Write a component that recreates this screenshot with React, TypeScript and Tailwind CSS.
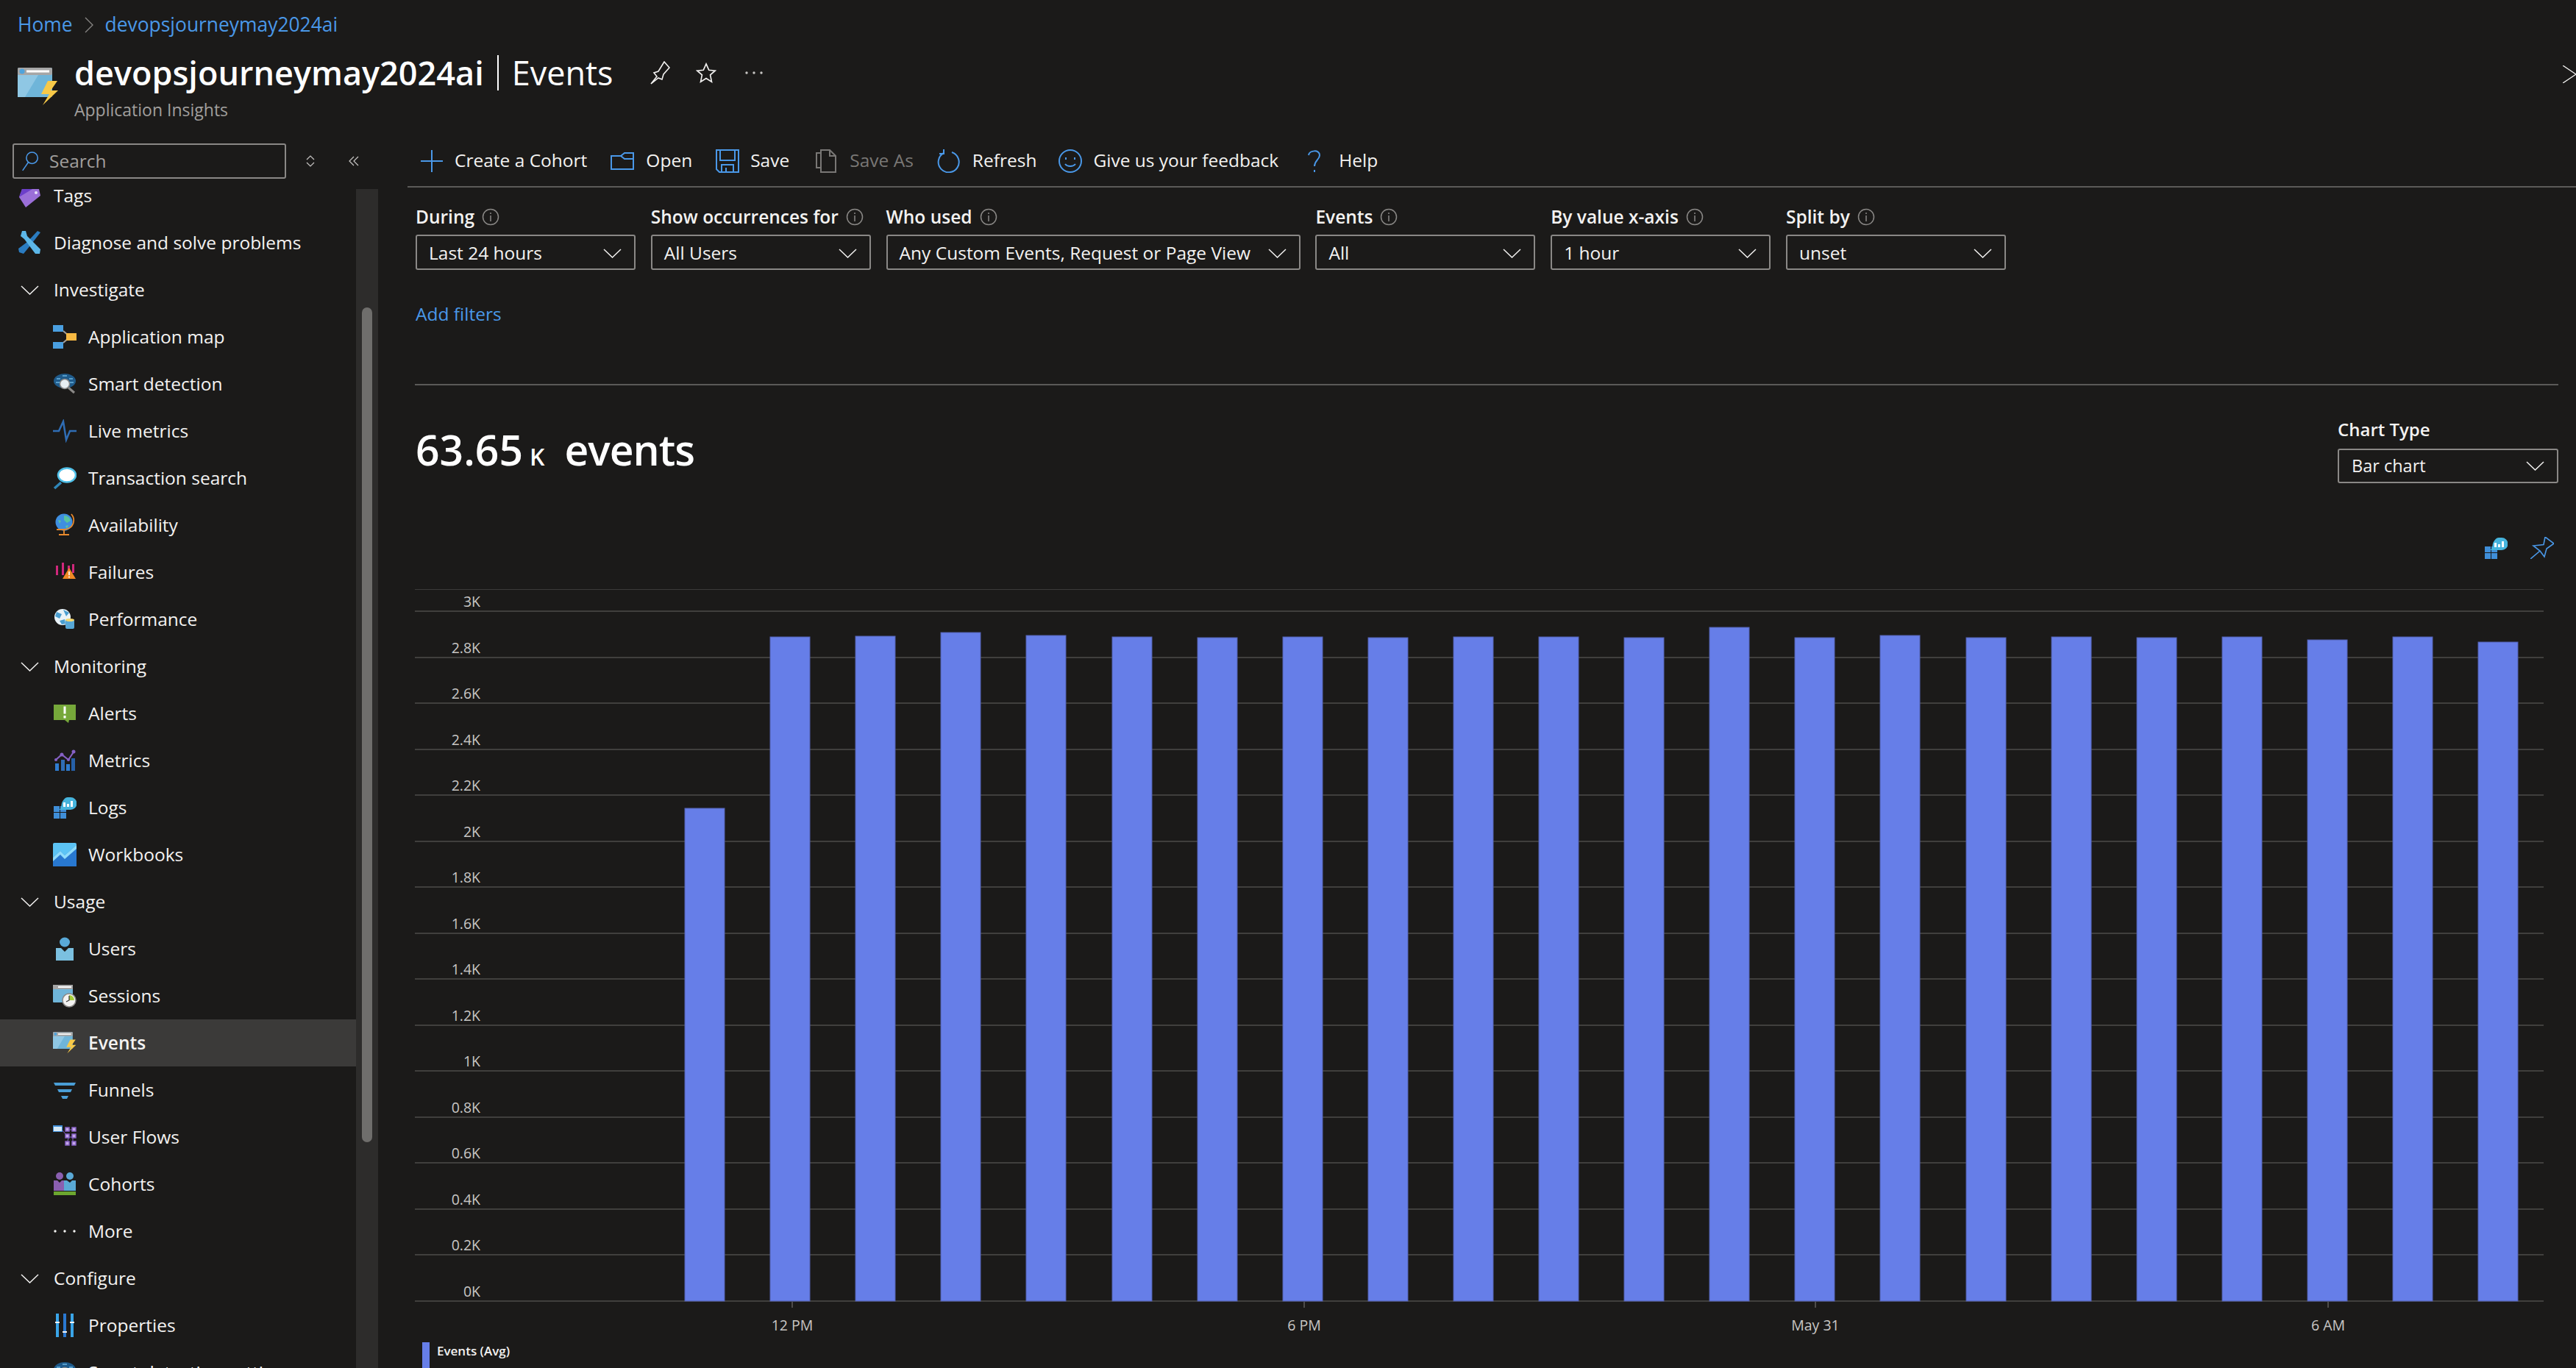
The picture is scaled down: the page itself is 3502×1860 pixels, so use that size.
import type { ReactNode } from "react";

const BLUE = "#4a98e8";

const Chevron = ({ className = "w-[25px] h-[13px]" }: { className?: string }) => (
  <svg viewBox="0 0 25 13" className={className} fill="none" stroke="#f3f2f1" strokeWidth="1.5">
    <path d="M1 1 L12.5 12 L24 1" />
  </svg>
);

const Info = () => (
  <svg viewBox="0 0 24 24" className="w-[24px] h-[24px] ml-[10px]" fill="none" stroke="#8a8886" strokeWidth="1.5">
    <circle cx="12" cy="12" r="10.5" />
    <path d="M12 10v8M12 6v2" />
  </svg>
);

const EventsIcon = ({ className }: { className: string }) => (
  <svg viewBox="0 0 56 52" className={className}>
    <rect x="0" y="0" width="47" height="40" rx="2" fill="#6fb5d9" />
    <path d="M0 40V10h28L10 40z" fill="#8fc7e4" />
    <rect x="0" y="0" width="47" height="10" rx="2" fill="#a6a6a6" />
    <rect x="12" y="3.5" width="31" height="3" fill="#fff" />
    <circle cx="6" cy="5" r="3.5" fill="#4fa3dc" />
    <path d="M54 18H41L32 36H43L34 51L55 31H45z" fill="#f7c948" />
  </svg>
);

const icons: Record<string, ReactNode> = {
  tag: (
    <svg viewBox="0 0 32 32" className="w-[32px] h-[32px]">
      <path d="M6 7H29L31 16L11 32L2 18z" fill="#9b6fd8" />
      <path d="M6 7H20L2 18z" fill="#6c3fc9" />
      <circle cx="25" cy="12" r="2" fill="#e8e0f8" />
    </svg>
  ),
  wrench: (
    <svg viewBox="0 0 32 32" className="w-[32px] h-[32px]">
      <path d="M27 0L31 2L17 20L8 31L2 29L1 24L13 15z" fill="#2b7cc0" />
      <path d="M6 0L4 7L9 11L24 31H30L31 25L13 7L11 0z" fill="#5cb7e8" />
    </svg>
  ),
  appmap: (
    <svg viewBox="0 0 32 32" className="w-[32px] h-[32px]">
      <path d="M14 8L22 15M14 24L22 17" stroke="#a19f9d" strokeWidth="2" />
      <rect x="0" y="0" width="14" height="9" fill="#4a9fe0" />
      <rect x="0" y="23" width="14" height="9" fill="#4a9fe0" />
      <rect x="18" y="11" width="14" height="10" fill="#f7b942" />
    </svg>
  ),
  smart: (
    <svg viewBox="0 0 32 32" className="w-[32px] h-[32px]">
      <ellipse cx="16" cy="12" rx="15" ry="10" fill="#1f5a8a" />
      <path d="M5 9h5M13 5h6M22 9h5M4 14h6M22 14h6" stroke="#69b4e0" strokeWidth="1.5" />
      <path d="M21 21L29 28" stroke="#8a8886" strokeWidth="3" />
      <circle cx="16" cy="16" r="6.5" fill="#e8eef2" stroke="#8a8886" strokeWidth="1.5" />
    </svg>
  ),
  live: (
    <svg viewBox="0 0 32 32" className="w-[32px] h-[32px]">
      <path d="M0 16H8L14 3L18 28L23 16H32" fill="none" stroke="#2f6db5" strokeWidth="2.5" />
    </svg>
  ),
  search: (
    <svg viewBox="0 0 32 32" className="w-[32px] h-[32px]">
      <path d="M2 30L11 22" stroke="#2f86b8" strokeWidth="3.5" />
      <ellipse cx="19" cy="12" rx="12" ry="9.5" fill="#fff" stroke="#50c0e8" strokeWidth="2.5" />
    </svg>
  ),
  globe: (
    <svg viewBox="0 0 32 32" className="w-[32px] h-[32px]">
      <circle cx="15" cy="12" r="11.5" fill="#3f8fe0" />
      <path d="M15 3c5 0 8 3 9 7l-5 3-4-4zM7 9l4 1-2 4zM17 17l4-1-2 5z" fill="#59c3a0" />
      <path d="M25 1c6 7 4 20-10 21H5" fill="none" stroke="#e98a2d" strokeWidth="1.8" />
      <path d="M15 23v5M8 29h14" stroke="#e98a2d" strokeWidth="1.8" />
    </svg>
  ),
  failures: (
    <svg viewBox="0 0 32 32" className="w-[32px] h-[32px]">
      <rect x="4" y="7" width="3" height="13" fill="#d0287c" />
      <rect x="12" y="3" width="3" height="17" fill="#d0287c" />
      <rect x="20" y="7" width="3" height="13" fill="#d0287c" />
      <rect x="26" y="5" width="3" height="12" fill="#d0287c" />
      <path d="M22 10L31 25H13z" fill="#f08a24" />
      <path d="M22 15v5M22 21.5v2" stroke="#fff" strokeWidth="1.6" />
    </svg>
  ),
  performance: (
    <svg viewBox="0 0 32 32" className="w-[32px] h-[32px]">
      <circle cx="13" cy="13" r="11" fill="#eaf3f8" />
      <path d="M5 6l7 3-3 6-6-3zM14 3l8 4-4 5zM9 18l7-2 1 6-5 1z" fill="#4a9ed0" />
      <rect x="17" y="16" width="12" height="13" rx="2" fill="#57a7d6" />
      <ellipse cx="23" cy="17" rx="6" ry="2" fill="#f5d76e" />
    </svg>
  ),
  alerts: (
    <svg viewBox="0 0 32 32" className="w-[32px] h-[32px]">
      <path d="M1 4H31V25H22L21 29L16 25H1z" fill="#76a83a" />
      <path d="M16 6.5v10M16 19v3.5" stroke="#fff" strokeWidth="3" />
    </svg>
  ),
  metrics: (
    <svg viewBox="0 0 32 32" className="w-[32px] h-[32px]">
      <rect x="3" y="20" width="5" height="10" fill="#2f7cd0" />
      <rect x="11" y="15" width="5" height="15" fill="#2f6db5" />
      <rect x="18" y="21" width="5" height="9" fill="#2f7cd0" />
      <rect x="25" y="13" width="5" height="17" fill="#2660a8" />
      <path d="M4 15L12 8L21 15L29 3" fill="none" stroke="#8661c5" strokeWidth="2.2" />
      <circle cx="4" cy="15" r="2" fill="#8661c5" />
      <circle cx="12" cy="8" r="2.5" fill="#8661c5" />
      <circle cx="21" cy="15" r="2" fill="#8661c5" />
      <circle cx="28" cy="4" r="2.5" fill="#8661c5" />
    </svg>
  ),
  logs: (
    <svg viewBox="0 0 32 32" className="w-[32px] h-[32px]">
      <rect x="1" y="14" width="8" height="8" fill="#3f8ed8" />
      <rect x="1" y="23" width="8" height="8" fill="#3f8ed8" />
      <rect x="10" y="23" width="8" height="8" fill="#3f8ed8" />
      <rect x="10" y="14" width="8" height="8" fill="#3f8ed8" />
      <path d="M20 2h4a7 7 0 0 1 0 17H8c4-2 3-6 4-9s4-8 8-8z" fill="#46b4dc" />
      <path d="M14 9h3v6h-3zM19 11h3v4h-3zM24 7h3v8h-3z" fill="#fff" />
    </svg>
  ),
  workbooks: (
    <svg viewBox="0 0 32 32" className="w-[32px] h-[32px]">
      <rect x="0" y="0" width="32" height="32" rx="2" fill="#5cc4f5" />
      <path d="M0 20L10 11L16 17L32 3V32H0z" fill="#2878d0" />
      <path d="M0 20L10 11L16 17L32 3V8L16 22L10 16L0 25z" fill="#8fdcfb" />
    </svg>
  ),
  users: (
    <svg viewBox="0 0 32 32" className="w-[32px] h-[32px]">
      <ellipse cx="16" cy="7" rx="7" ry="6.5" fill="#59a9d8" />
      <path d="M4 15h7l5 5 5-5h7v17H4z" fill="#7bc0e0" />
    </svg>
  ),
  sessions: (
    <svg viewBox="0 0 32 32" className="w-[32px] h-[32px]">
      <rect x="0" y="1" width="27" height="24" rx="1" fill="#6fb5d9" />
      <rect x="0" y="1" width="27" height="6" fill="#a6a6a6" />
      <rect x="7" y="3" width="18" height="2" fill="#fff" />
      <circle cx="22" cy="22" r="9" fill="#f3f2f1" stroke="#8a8886" strokeWidth="1.5" />
      <path d="M22 22V15a7 7 0 0 1 7 7z" fill="#a6ce39" />
      <path d="M22 16v6l-4 2" fill="none" stroke="#323130" strokeWidth="1.2" />
    </svg>
  ),
  events: <EventsIcon className="w-[32px] h-[30px]" />,
  funnels: (
    <svg viewBox="0 0 32 32" className="w-[32px] h-[32px]">
      <path d="M1 6H31L29 10H3z" fill="#4a9ed6" />
      <path d="M6 15H26L24 19H8z" fill="#4a9ed6" />
      <path d="M11 24H21L19 28H13z" fill="#4a9ed6" />
    </svg>
  ),
  flows: (
    <svg viewBox="0 0 32 32" className="w-[32px] h-[32px]">
      <rect x="0" y="0" width="13" height="9" fill="#3f8ed8" />
      <rect x="1" y="2" width="11" height="6" fill="#d5e8f5" />
      <path d="M13 7L18 13M22 6h6M18 16h10M22 15l-3 9M27 15v9" stroke="#8661c5" strokeWidth="1" fill="none" />
      <g fill="#c4a7e8" stroke="#8661c5" strokeWidth="1.5">
        <rect x="17" y="3" width="5" height="5" />
        <rect x="26" y="3" width="5" height="5" />
        <rect x="17" y="12" width="5" height="5" />
        <rect x="26" y="12" width="5" height="5" />
        <rect x="17" y="22" width="5" height="5" />
        <rect x="26" y="22" width="5" height="5" />
      </g>
    </svg>
  ),
  cohorts: (
    <svg viewBox="0 0 32 32" className="w-[32px] h-[32px]">
      <circle cx="9" cy="5" r="5" fill="#8a5fb0" />
      <circle cx="23" cy="5" r="5" fill="#5aa9d6" />
      <path d="M1 11h5l3 3 3-3h4v14H1z" fill="#8a5fb0" />
      <path d="M15 11h4l4 3 3-3h5v14H15z" fill="#5aa9d6" />
      <rect x="1" y="26" width="30" height="5" fill="#6ca62f" />
    </svg>
  ),
  more: (
    <svg viewBox="0 0 32 32" className="w-[32px] h-[32px]" fill="#f3f2f1">
      <circle cx="3" cy="16" r="1.7" />
      <circle cx="16" cy="16" r="1.7" />
      <circle cx="29" cy="16" r="1.7" />
    </svg>
  ),
  properties: (
    <svg viewBox="0 0 32 32" className="w-[32px] h-[32px]">
      <rect x="4" y="0" width="4" height="32" fill="#3aa5e8" />
      <rect x="14" y="0" width="4" height="32" fill="#2a78d0" />
      <rect x="24" y="0" width="4" height="32" fill="#3aa5e8" />
      <rect x="3" y="11" width="6" height="2" fill="#f3f2f1" />
      <rect x="13" y="24" width="6" height="2" fill="#f3f2f1" />
      <rect x="23" y="11" width="6" height="2" fill="#f3f2f1" />
    </svg>
  ),
};

type NavRow = { label: string; icon?: string; group?: boolean; active?: boolean };

const navRows: NavRow[] = [
  { label: "Tags", icon: "tag", group: true },
  { label: "Diagnose and solve problems", icon: "wrench", group: true },
  { label: "Investigate", group: true },
  { label: "Application map", icon: "appmap" },
  { label: "Smart detection", icon: "smart" },
  { label: "Live metrics", icon: "live" },
  { label: "Transaction search", icon: "search" },
  { label: "Availability", icon: "globe" },
  { label: "Failures", icon: "failures" },
  { label: "Performance", icon: "performance" },
  { label: "Monitoring", group: true },
  { label: "Alerts", icon: "alerts" },
  { label: "Metrics", icon: "metrics" },
  { label: "Logs", icon: "logs" },
  { label: "Workbooks", icon: "workbooks" },
  { label: "Usage", group: true },
  { label: "Users", icon: "users" },
  { label: "Sessions", icon: "sessions" },
  { label: "Events", icon: "events", active: true },
  { label: "Funnels", icon: "funnels" },
  { label: "User Flows", icon: "flows" },
  { label: "Cohorts", icon: "cohorts" },
  { label: "More", icon: "more" },
  { label: "Configure", group: true },
  { label: "Properties", icon: "properties" },
  { label: "Smart detection settings", icon: "smart" },
];

const NavItem = ({ row }: { row: NavRow }) => {
  if (row.group) {
    return (
      <div className="h-[64px] flex items-center shrink-0">
        <div className="w-[32px] ml-[24px] mr-[17px] flex justify-center">
          {row.icon ? icons[row.icon] : <Chevron />}
        </div>
        <span>{row.label}</span>
      </div>
    );
  }
  return (
    <div
      className={
        row.active
          ? "h-[64px] flex items-center shrink-0 bg-[#3b3a39] font-semibold"
          : "h-[64px] flex items-center shrink-0"
      }
    >
      <div className="w-[32px] ml-[72px] mr-[16px] flex justify-center">{row.icon && icons[row.icon]}</div>
      <span>{row.label}</span>
    </div>
  );
};

const Sidebar = () => (
  <aside className="w-[514px] shrink-0 flex flex-col min-h-0">
    <div className="flex items-center pt-[25px] pl-[17px] shrink-0">
      <div className="w-[372px] h-[48px] border-2 border-[#8a8886] rounded-[3px] flex items-center pl-[10px] text-[#a19f9d]">
        <svg viewBox="0 0 28 34" className="w-[24px] h-[30px] mr-[14px]" fill="none" stroke={BLUE} strokeWidth="1.8">
          <circle cx="17" cy="12" r="9" />
          <path d="M11 19L2 32" />
        </svg>
        Search
      </div>
      <svg viewBox="0 0 14 16" className="w-[14px] h-[16px] ml-[26px]" fill="none" stroke="#c8c6c4" strokeWidth="1.2">
        <path d="M2 6L7 1L12 6M2 10L7 15L12 10" />
      </svg>
      <svg viewBox="0 0 16 14" className="w-[16px] h-[14px] ml-[44px]" fill="none" stroke="#c8c6c4" strokeWidth="1.2">
        <path d="M8 1L2 7L8 13M14 1L8 7L14 13" />
      </svg>
    </div>
    <div className="flex flex-1 min-h-0 mt-[14px]">
      <div className="w-[484px] overflow-hidden">
        <div className="-mt-[23px] flex flex-col">
          {navRows.map((row) => (
            <NavItem key={row.label} row={row} />
          ))}
        </div>
      </div>
      <div className="w-[30px] bg-[#2d2c2b] px-[8px] pt-[161px]">
        <div className="h-[1135px] rounded-full bg-[#6f6e6c]" />
      </div>
    </div>
  </aside>
);

const toolbarItems: { label: string; icon: ReactNode; disabled?: boolean; w: string }[] = [
  {
    label: "Create a Cohort",
    w: "w-[30px] mr-[16px]",
    icon: (
      <svg viewBox="0 0 30 30" className="w-[30px] h-[30px]" stroke={BLUE} strokeWidth="2">
        <path d="M15 0v30M0 15h30" />
      </svg>
    ),
  },
  {
    label: "Open",
    w: "w-[32px] ml-[32px] mr-[16px]",
    icon: (
      <svg viewBox="0 0 32 24" className="w-[32px] h-[24px]" fill="none" stroke={BLUE} strokeWidth="2">
        <path d="M1 5H14L19 1H31V23H1z" />
        <path d="M14 5L19 9H31" />
      </svg>
    ),
  },
  {
    label: "Save",
    w: "w-[32px] ml-[32px] mr-[15px]",
    icon: (
      <svg viewBox="0 0 32 32" className="w-[32px] h-[32px]" fill="none" stroke={BLUE} strokeWidth="2">
        <path d="M1 1H31V31H5L1 27z" />
        <path d="M6 1V15H26V1M8 31V21H24V31M14 25V31" />
      </svg>
    ),
  },
  {
    label: "Save As",
    disabled: true,
    w: "w-[28px] ml-[36px] mr-[18px]",
    icon: (
      <svg viewBox="0 0 28 32" className="w-[28px] h-[32px]" fill="none" stroke="#797775" strokeWidth="2">
        <path d="M7 25H1V5H7M7 31V1H19L27 9V31z" />
        <path d="M19 1V9H27" />
      </svg>
    ),
  },
  {
    label: "Refresh",
    w: "w-[32px] ml-[31px] mr-[17px]",
    icon: (
      <svg viewBox="0 0 32 32" className="w-[32px] h-[32px]" fill="none" stroke={BLUE} strokeWidth="2">
        <path d="M10 5A14 14 0 1 0 21 4" />
        <path d="M10 0V6H4" />
      </svg>
    ),
  },
  {
    label: "Give us your feedback",
    w: "w-[32px] ml-[30px] mr-[15px]",
    icon: (
      <svg viewBox="0 0 32 32" className="w-[32px] h-[32px]" fill="none" stroke={BLUE} strokeWidth="2">
        <circle cx="16" cy="16" r="15" />
        <path d="M9 20c3 4 11 4 14 0M10 11v3M22 11v3" />
      </svg>
    ),
  },
  {
    label: "Help",
    w: "w-[20px] ml-[39px] mr-[23px]",
    icon: (
      <svg viewBox="0 0 20 32" className="w-[20px] h-[32px]" fill="none" stroke={BLUE} strokeWidth="2">
        <path d="M2 8C3 1 17 0 17 8C17 14 10 15 10 23M10 28v3" />
      </svg>
    ),
  },
];

const Toolbar = () => (
  <div className="h-[85px] shrink-0 border-b-2 border-[#5b5a58] flex items-center pl-[18px] pt-[14px]">
    {toolbarItems.map((item) => (
      <div key={item.label} className={item.disabled ? "flex items-center text-[#797775]" : "flex items-center"}>
        <div className={`${item.w} flex justify-center`}>{item.icon}</div>
        <span>{item.label}</span>
      </div>
    ))}
  </div>
);

const filters = [
  { label: "During", value: "Last 24 hours", w: "w-[299px]" },
  { label: "Show occurrences for", value: "All Users", w: "w-[299px]" },
  { label: "Who used", value: "Any Custom Events, Request or Page View", w: "w-[563px]" },
  { label: "Events", value: "All", w: "w-[299px]" },
  { label: "By value x-axis", value: "1 hour", w: "w-[299px]" },
  { label: "Split by", value: "unset", w: "w-[299px]" },
];

const Filters = () => (
  <div className="flex gap-x-[20.8px] pt-[26px]">
    {filters.map((f) => (
      <div key={f.label} className={f.w}>
        <div className="h-[28px] flex items-center font-semibold mb-[10px]">
          {f.label}
          <Info />
        </div>
        <div className="h-[48px] border-2 border-[#8a8886] rounded-[3px] flex items-center justify-between pl-[16px] pr-[17px] pt-[2px]">
          <span className="whitespace-nowrap">{f.value}</span>
          <Chevron />
        </div>
      </div>
    ))}
  </div>
);

const barTops = [
  1099, 866, 865, 860, 864, 866, 867, 866, 867, 866, 866, 867, 853, 867, 864, 867, 866, 867, 866, 870, 866, 873,
];
// the chart svg starts at x=564, y=790
const yLabels = ["3K", "2.8K", "2.6K", "2.4K", "2.2K", "2K", "1.8K", "1.6K", "1.4K", "1.2K", "1K", "0.8K", "0.6K", "0.4K", "0.2K", "0K"];
const xLabels = [
  { label: "12 PM", x: 513 },
  { label: "6 PM", x: 1209 },
  { label: "May 31", x: 1904 },
  { label: "6 AM", x: 2601 },
];

const Chart = () => (
  <svg viewBox="0 0 2914 1030" className="w-[2914px] h-[1030px] shrink-0 mt-[30px]">
    <line x1="0" x2="2894" y1="11.5" y2="11.5" stroke="#3b3a39" strokeWidth="1" />
    {yLabels.map((label, i) => {
      const y = Math.round(41 + i * 62.53);
      return (
        <g key={label}>
          <line x1="0" x2="2894" y1={y} y2={y} stroke="#403f3d" strokeWidth="2" />
          <text x="89" y={y - 6} textAnchor="end" fontSize="19.5" fill="#c8c6c4">
            {label}
          </text>
        </g>
      );
    })}
    {barTops.map((top, i) => (
      <rect
        key={i}
        x={Math.round(367 + i * 116.1)}
        y={top - 790}
        width="54"
        height={1769 - top}
        fill="#667ee8"
        stroke="#5361b0"
        strokeWidth="1"
      />
    ))}
    {xLabels.map((t) => (
      <g key={t.label}>
        <line x1={t.x} x2={t.x} y1="980" y2="988" stroke="#605e5c" strokeWidth="1.5" />
        <text x={t.x} y="1019" textAnchor="middle" fontSize="19.5" fill="#c8c6c4">
          {t.label}
        </text>
      </g>
    ))}
  </svg>
);

const Main = () => (
  <main className="flex-1 min-w-0 flex flex-col ml-[40px]">
    <Toolbar />
    <div className="flex-1 min-h-0 flex flex-col pl-[10px] pr-[24px] overflow-hidden">
      <div className="pl-[1px]">
        <Filters />
      </div>
      <a className="text-[#4a98e8] h-[28px] mt-[46px] pl-[1px] flex items-center">Add filters</a>
      <div className="h-[2px] bg-[#5b5a58] mt-[81px] shrink-0" />
      <div className="flex justify-between shrink-0">
        <div className="pl-[1px] pt-[45px] text-[57px] leading-[84px] font-semibold text-white flex items-baseline">
          63.65
          <span className="text-[32px] leading-none ml-[9px] mr-[27px]">K</span>
          <span className="tracking-[-1px]">events</span>
        </div>
        <div className="w-[300px] pt-[46px]">
          <div className="font-semibold h-[28px] flex items-center mb-[12px] text-[24px]">Chart Type</div>
          <div className="h-[47px] border-2 border-[#8a8886] rounded-[3px] flex items-center justify-between pl-[17px] pr-[17px] text-[23.5px]">
            <span>Bar chart</span>
            <Chevron />
          </div>
        </div>
      </div>
      <div className="flex justify-end items-center gap-x-[33px] h-[30px] mt-[73px] pr-[6px] shrink-0">
        <div className="w-[30px]">{icons.logs}</div>
        <svg viewBox="0 0 32 30" className="w-[32px] h-[30px]" fill="none" stroke={BLUE} strokeWidth="1.6">
          <path d="M0 30L13 19L4 12L18 10.5L20 0L32 9L22 16L19 27L13 19" />
        </svg>
      </div>
      <Chart />
      <div className="flex items-start mt-[5px] pl-[10px] shrink-0">
        <div className="w-[10px] h-[40px] bg-[#667ee8]" />
        <span className="text-[17px] font-semibold ml-[10px] leading-[24px]">Events (Avg)</span>
      </div>
    </div>
  </main>
);

const Header = () => (
  <header className="h-[170px] shrink-0 flex flex-col relative">
    <div className="h-[40px] mt-[14px] pl-[24px] flex items-center text-[#4a98e8] text-[26.4px]">
      <span>Home</span>
      <svg viewBox="0 0 12 22" className="w-[12px] h-[22px] mx-[16px]" fill="none" stroke="#8a8886" strokeWidth="1.3">
        <path d="M1 1L11 11L1 21" />
      </svg>
      <span>devopsjourneymay2024ai</span>
    </div>
    <div className="flex pl-[24px] mt-[38px]">
      <EventsIcon className="w-[56px] h-[52px]" />
      <div className="ml-[21px] -mt-[25px]">
        <div className="flex items-center h-[64px] text-[45px] text-white">
          <span className="font-semibold">devopsjourneymay2024ai</span>
          <span className="ml-[18px] mr-[18px] w-[2px] h-[48px] bg-white" />
          <span>Events</span>
          <svg viewBox="0 0 28 32" className="w-[28px] h-[32px] ml-[49px]" fill="none" stroke="#f3f2f1" strokeWidth="1.6">
            <path d="M2 31L10 21L6 16L12 14L20 1L27 9L19 18L17 25L12 23z" />
          </svg>
          <svg viewBox="0 0 30 30" className="w-[28px] h-[28px] ml-[35px]" fill="none" stroke="#f3f2f1" strokeWidth="1.8">
            <path d="M15 2L19 11L28 12L21 18L23 28L15 23L7 28L9 18L2 12L11 11z" />
          </svg>
          <svg viewBox="0 0 24 4" className="w-[24px] h-[4px] ml-[39px]" fill="#c8c6c4">
            <circle cx="2" cy="2" r="1.7" />
            <circle cx="12" cy="2" r="1.7" />
            <circle cx="22" cy="2" r="1.7" />
          </svg>
        </div>
        <div className="text-[23px] text-[#a19f9d] mt-[1px]">Application Insights</div>
      </div>
    </div>
    <svg viewBox="0 0 18 24" className="absolute right-0 top-[89px] w-[18px] h-[24px]" fill="none" stroke="#f3f2f1" strokeWidth="1.4">
      <path d="M0 0L18 12L0 24" />
    </svg>
  </header>
);

export default function App() {
  return (
    <div className="w-[3502px] h-[1860px] overflow-hidden flex flex-col bg-[#1b1a19] text-[#f3f2f1] text-[24.5px] font-['Open_Sans',sans-serif]">
      <Header />
      <div className="flex flex-1 min-h-0">
        <Sidebar />
        <Main />
      </div>
    </div>
  );
}
